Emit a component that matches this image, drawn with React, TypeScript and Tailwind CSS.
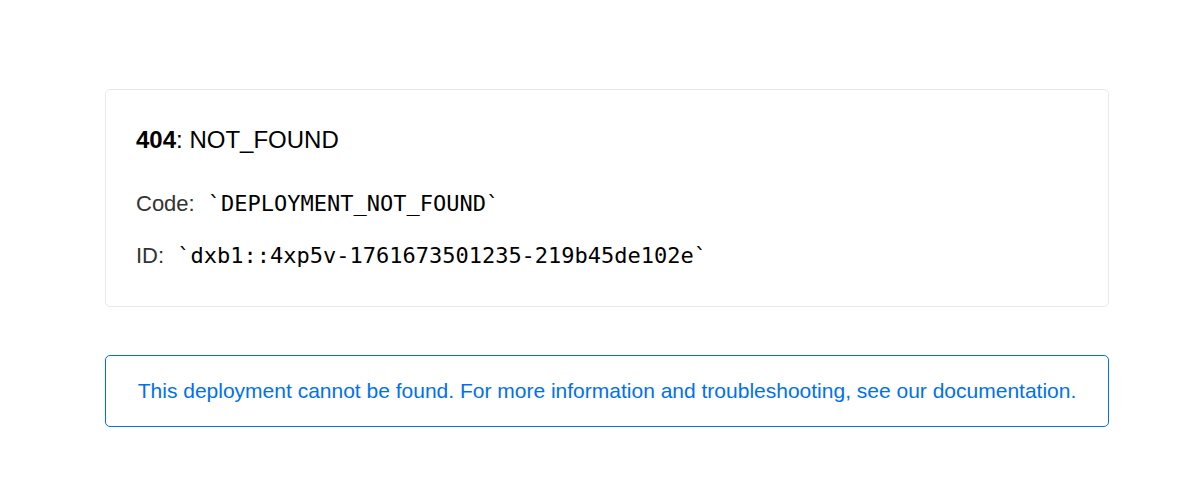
export default function App() {
  return (
    <main className="min-h-screen bg-white font-['Liberation_Sans',Arial,sans-serif]">
      <div className="ml-[105px] w-[1004px] pt-[89px]">
        {/* Error card */}
        <div className="rounded-[5px] border border-[#eaeaea] px-[30px] pt-[36px] pb-[35px]">
          <p className="text-[24px] leading-[28px] text-black">
            <strong className="font-bold">404</strong>: NOT_FOUND
          </p>
          <p className="mt-[35px] text-[22px] leading-[30px] text-[#333]">
            Code:{" "}
            <code className="ml-[7px] font-['DejaVu_Sans_Mono',monospace] text-[22px] leading-none text-black">
              `DEPLOYMENT_NOT_FOUND`
            </code>
          </p>
          <p className="mt-[22px] text-[22px] leading-[30px] text-[#333]">
            ID:{" "}
            <code className="ml-[7px] font-['DejaVu_Sans_Mono',monospace] text-[22px] leading-none text-black">
              `dxb1::4xp5v-1761673501235-219b45de102e`
            </code>
          </p>
        </div>

        {/* Help link */}
        <a
          href="#"
          className="mt-[48px] block rounded-[5px] border border-[#0070f3] py-[20px] text-center text-[21px] leading-[30px] text-[#0070f3]"
        >
          This deployment cannot be found. For more information and troubleshooting, see our documentation.
        </a>
      </div>
    </main>
  );
}
